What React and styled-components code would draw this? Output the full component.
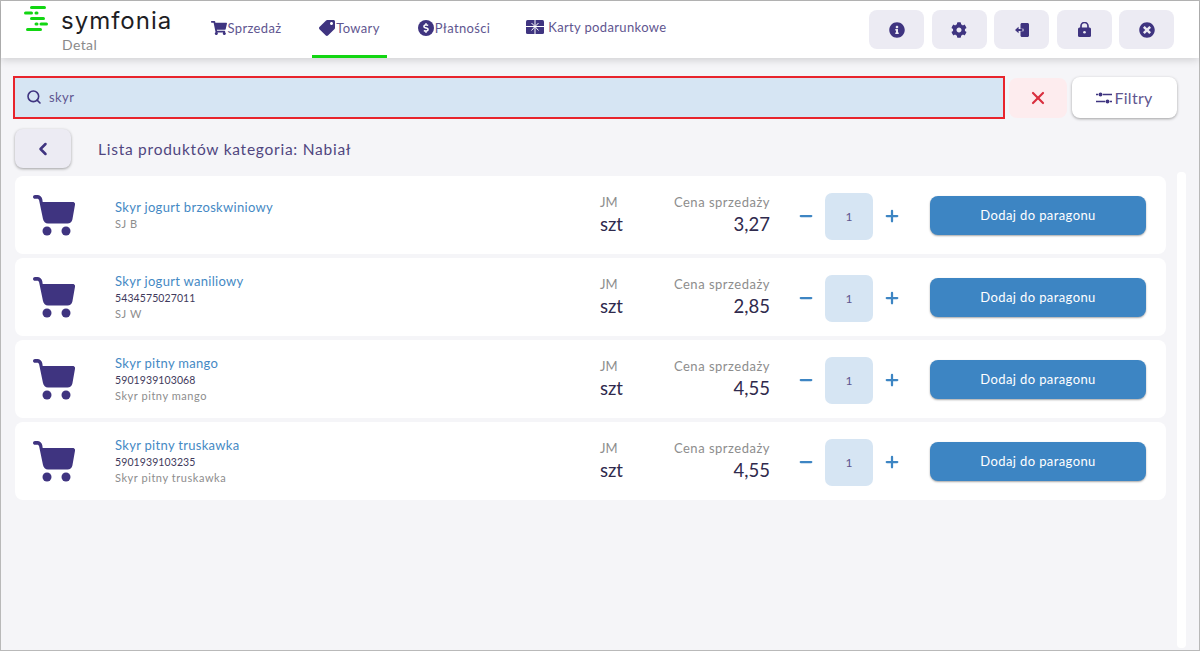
import React from 'react'
import styled, { createGlobalStyle } from 'styled-components'
import { FaShoppingCart, FaTag, FaDollarSign, FaInfoCircle, FaCog, FaTimesCircle } from 'react-icons/fa'
import { Search, X, ChevronLeft, Minus, Plus } from 'lucide-react'

const PURPLE = '#3f3480'
const BLUE = '#3d85c3'

const GlobalStyle = createGlobalStyle`
  html, body { margin: 0; padding: 0; height: 100%; }
  body { font-family: Lato, "Noto Sans", sans-serif; background: #f5f5f8; overflow: hidden; }
  * { box-sizing: border-box; }
`

const Page = styled.div`
  width: 1200px;
  height: 651px;
  border: 1px solid #b9b9b9;
  background: #f5f5f8;
  display: flex;
  flex-direction: column;
`

const Header = styled.header`
  height: 57px;
  flex: none;
  background: #fff;
  display: flex;
  box-shadow: 0 2px 8px rgba(0, 0, 0, 0.16);
  padding-right: 25px;
`

const Brand = styled.div`
  width: 209px;
  padding: 5px 0 0 21px;
`

const BrandTop = styled.div`
  display: flex;
  align-items: center;
  gap: 12px;
  height: 29px;
`

const BrandName = styled.span`
  font-family: Inter, Lato, sans-serif;
  font-size: 24px;
  line-height: 29px;
  font-weight: 400;
  letter-spacing: 1px;
  color: #1e1e24;
`

const BrandSub = styled.div`
  font-size: 14px;
  line-height: 16px;
  color: #8a8a8a;
  margin: 2px 0 0 40px;
  letter-spacing: 0.4px;
`

const Nav = styled.nav`
  display: flex;
  flex: 1;
`

const NavItem = styled.div`
  height: 57px;
  width: ${p => p.$w}px;
  margin-right: ${p => p.$mr}px;
  display: flex;
  align-items: center;
  justify-content: center;
  gap: 1px;
  padding-bottom: ${p => p.$pb || 1}px;
  font-size: 13px;
  color: #5f5690;
  letter-spacing: 0.35px;
  white-space: nowrap;
  border-bottom: 3px solid ${p => (p.$active ? '#12d612' : 'transparent')};
  svg { color: ${PURPLE}; flex: none; }
`

const DollarBadge = styled.span`
  width: 16px;
  height: 16px;
  flex: none;
  border-radius: 50%;
  background: ${PURPLE};
  display: flex;
  align-items: center;
  justify-content: center;
  svg { color: #fff; }
`

const HeaderActions = styled.div`
  display: flex;
  gap: 7.5px;
  padding-top: 9px;
`

const IconButton = styled.button`
  width: 55px;
  height: 39px;
  border: 0;
  border-radius: 8px;
  background: #ecebf3;
  color: ${PURPLE};
  display: flex;
  align-items: center;
  justify-content: center;
  padding: 0;
`

const Content = styled.main`
  flex: 1;
  display: flex;
  flex-direction: column;
  padding: 18px 13px 2px 12px;
`

const SearchRow = styled.div`
  display: flex;
  align-items: center;
  height: 43px;
`

const SearchBox = styled.div`
  width: 992px;
  height: 43px;
  border: 2px solid #e8242c;
  background: #d6e5f3;
  display: flex;
  align-items: center;
  gap: 7px;
  padding: 0 0 1px 11px;
  font-size: 13px;
  color: #5f5690;
  letter-spacing: 0.4px;
  svg { color: ${PURPLE}; }
`

const ClearButton = styled.button`
  width: 58px;
  height: 40px;
  margin-left: 4px;
  border: 0;
  border-radius: 8px;
  background: #fdecee;
  color: #d9303f;
  display: flex;
  align-items: center;
  justify-content: center;
`

const FilterButton = styled.button`
  width: 105px;
  height: 41px;
  margin-left: 5px;
  border: 0;
  border-radius: 8px;
  background: #fff;
  box-shadow: 0 1px 3px rgba(0, 0, 0, 0.35);
  color: #5f5690;
  font-family: inherit;
  font-size: 16px;
  letter-spacing: 0.3px;
  display: flex;
  align-items: center;
  justify-content: center;
  gap: 2px;
`

const TitleRow = styled.div`
  display: flex;
  align-items: center;
  height: 39px;
  margin: 10px 0 8px 2px;
`

const BackButton = styled.button`
  width: 56px;
  height: 39px;
  border: 0;
  border-radius: 8px;
  background: #ecebf3;
  box-shadow: 0 1px 3px rgba(0, 0, 0, 0.35);
  color: ${PURPLE};
  display: flex;
  align-items: center;
  justify-content: center;
  padding: 0;
`

const Title = styled.h1`
  margin: 0 0 0 27px;
  font-size: 15.5px;
  font-weight: 400;
  color: #50467f;
  letter-spacing: 0.75px;
`

const ListArea = styled.div`
  flex: 1;
  display: flex;
  gap: 11px;
  margin-left: 2px;
`

const List = styled.div`
  width: 1151px;
  flex: none;
  display: flex;
  flex-direction: column;
  gap: 4px;
`

const Track = styled.div`
  width: 9px;
  margin-top: -4px;
  background: #fff;
  border-radius: 4px;
`

const Card = styled.article`
  height: 78px;
  background: #fff;
  border-radius: 8px;
  display: flex;
  align-items: center;
  padding-left: 18px;
`

const ProductInfo = styled.div`
  width: 485px;
  margin-left: 40px;
  padding-top: 1px;
  display: flex;
  flex-direction: column;
`

const ProductName = styled.div`
  font-size: 13px;
  line-height: 16px;
  margin-bottom: 1px;
  color: #4589c4;
  letter-spacing: 0.3px;
`

const ProductCode = styled.div`
  font-size: 10.5px;
  line-height: 16px;
  color: #3f3a5c;
  letter-spacing: 0.1px;
`

const ProductNote = styled.div`
  font-size: 11px;
  line-height: 16px;
  color: #8d8d8d;
  letter-spacing: 0.55px;
`

const Unit = styled.div`
  width: 60px;
`

const Caption = styled.div`
  font-size: 13px;
  line-height: 16px;
  color: #8d8d8d;
  letter-spacing: ${p => (p.$wide ? '0.5px' : '0')};
`

const Value = styled.div`
  font-size: 18.500px;
  line-height: 24px;
  margin-top: 2px;
  color: #2f2a4d;
`

const Price = styled.div`
  width: 110px;
  text-align: right;
`

const Qty = styled.div`
  width: 104px;
  margin: 2px 0 0 27px;
  display: flex;
  align-items: center;
  justify-content: space-between;
  svg { color: ${BLUE}; }
`

const QtyValue = styled.div`
  width: 48px;
  height: 47px;
  border-radius: 7px;
  background: #d6e5f3;
  color: #5f5690;
  font-size: 12px;
  display: flex;
  align-items: center;
  justify-content: center;
`

const AddButton = styled.button`
  width: 216px;
  height: 39px;
  margin-left: 29px;
  border: 0;
  border-radius: 8px;
  background: ${BLUE};
  box-shadow: 0 1px 2px rgba(0, 0, 0, 0.35);
  color: #fff;
  font-family: inherit;
  font-size: 13px;
  letter-spacing: 0.4px;
`

const LogoMark = () => (
  <svg width="27" height="29" viewBox="0 0 27 29">
    <g fill="none" stroke="#12d612" strokeWidth="3" strokeLinecap="round">
      <path d="M9.500 1.500h13" />
      <path d="M3.500 7h6M14 7h1" />
      <path d="M9.500 12.500h12" />
      <path d="M14 18h1M19 18h5.500" />
      <path d="M5.500 23.500h13" />
    </g>
  </svg>
)

const CartIcon = () => (
  <svg width="42" height="43" viewBox="0 0 42 43" fill={PURPLE} style={{ flex: 'none' }}>
    <path d="M2 1C.9 1 0 1.800 0 2.900S.9 4.800 2 4.800h2.300c.9 0 1.600.6 1.800 1.500L10 25c.5 2.700 2.400 4.500 5 4.500h19.500c2.500 0 4.300-1.500 4.900-4L42 10.800C42.400 9.200 41.300 8 39.700 8H9.700L9.300 5.300C8.800 2.600 6.900 1 4.300 1z" />
    <circle cx="14" cy="37" r="4.500" />
    <circle cx="33" cy="37" r="4.500" />
  </svg>
)

const GiftCardIcon = () => (
  <svg width="18" height="14" viewBox="0 0 18 14">
    <rect width="18" height="14" rx="1.500" fill={PURPLE} />
    <path d="M0 6.500h18M9 0v14M9 6.500L5.500 3M9 6.500L12.500 3M9 6.500L5.500 10.500M9 6.500L12.500 10.500" stroke="#fff" strokeWidth="1" fill="none" />
  </svg>
)

const ExitIcon = () => (
  <svg width="14" height="14" viewBox="0 0 14 14" fill={PURPLE}>
    <path d="M5.500 1.500C5.500.7 6.200 0 7 0h5.500c.8 0 1.500.7 1.500 1.500v11c0 .8-.7 1.500-1.500 1.500H7c-.8 0-1.500-.7-1.500-1.500V8.200h3V5.800h-3z" />
    <path d="M0 7l3.600-3.200v2.200H7.500v2H3.600v2.200z" />
  </svg>
)

const LockIcon = () => (
  <svg width="13" height="15" viewBox="0 0 13 15">
    <path d="M3 6.500V4a3.500 3.500 0 0 1 7 0v2.500" fill="none" stroke={PURPLE} strokeWidth="1.700" />
    <rect y="5.500" width="13" height="9.500" rx="1.500" fill={PURPLE} />
    <circle cx="6.500" cy="10.200" r="1.300" fill="#ecebf3" />
  </svg>
)

const FilterIcon = () => (
  <svg width="16" height="12" viewBox="0 0 16 12" fill="none" stroke="#3f3480" strokeWidth="1.500">
    <path d="M0 2.500h2M7 2.500h9M0 9.500h9M14 9.500h2" />
    <circle cx="4.500" cy="2.500" r="2" fill="#3f3480" stroke="none" />
    <circle cx="11.500" cy="9.500" r="2" fill="#3f3480" stroke="none" />
  </svg>
)

const products = [
  { name: 'Skyr jogurt brzoskwiniowy', note: 'SJ B', price: '3,27' },
  { name: 'Skyr jogurt waniliowy', code: '5434575027011', note: 'SJ W', price: '2,85' },
  { name: 'Skyr pitny mango', code: '5901939103068', note: 'Skyr pitny mango', price: '4,55' },
  { name: 'Skyr pitny truskawka', code: '5901939103235', note: 'Skyr pitny truskawka', price: '4,55' },
]

const App = () => {
  return (
    <>
      <GlobalStyle />
      <Page>
        <Header>
          <Brand>
            <BrandTop>
              <LogoMark />
              <BrandName>symfonia</BrandName>
            </BrandTop>
            <BrandSub>Detal</BrandSub>
          </Brand>
          <Nav>
            <NavItem $w={72} $mr={30}><FaShoppingCart size={16} />Sprzedaż</NavItem>
            <NavItem $w={75} $mr={31} $active><FaTag size={16} style={{ transform: 'scaleX(-1)' }} />Towary</NavItem>
            <NavItem $w={72} $mr={36}><DollarBadge><FaDollarSign size={10} /></DollarBadge>Płatności</NavItem>
            <NavItem $w={140} $mr={0} $pb={3}><GiftCardIcon />&nbsp;Karty podarunkowe</NavItem>
          </Nav>
          <HeaderActions>
            <IconButton><FaInfoCircle size={16} /></IconButton>
            <IconButton><FaCog size={16} /></IconButton>
            <IconButton><ExitIcon /></IconButton>
            <IconButton><LockIcon /></IconButton>
            <IconButton><FaTimesCircle size={16} /></IconButton>
          </HeaderActions>
        </Header>
        <Content>
          <SearchRow>
            <SearchBox><Search size={16} strokeWidth={2.4} />skyr</SearchBox>
            <ClearButton><X size={20} strokeWidth={2.6} /></ClearButton>
            <FilterButton><FilterIcon />Filtry</FilterButton>
          </SearchRow>
          <TitleRow>
            <BackButton><ChevronLeft size={20} strokeWidth={3} /></BackButton>
            <Title>Lista produktów kategoria: Nabiał</Title>
          </TitleRow>
          <ListArea>
            <List>
              {products.map(p => (
                <Card key={p.name}>
                  <CartIcon />
                  <ProductInfo>
                    <ProductName>{p.name}</ProductName>
                    {p.code && <ProductCode>{p.code}</ProductCode>}
                    <ProductNote>{p.note}</ProductNote>
                  </ProductInfo>
                  <Unit>
                    <Caption>JM</Caption>
                    <Value>szt</Value>
                  </Unit>
                  <Price>
                    <Caption $wide>Cena sprzedaży</Caption>
                    <Value>{p.price}</Value>
                  </Price>
                  <Qty>
                    <Minus size={18} strokeWidth={3} />
                    <QtyValue>1</QtyValue>
                    <Plus size={18} strokeWidth={3} />
                  </Qty>
                  <AddButton>Dodaj do paragonu</AddButton>
                </Card>
              ))}
            </List>
            <Track />
          </ListArea>
        </Content>
      </Page>
    </>
  )
}

export default App
